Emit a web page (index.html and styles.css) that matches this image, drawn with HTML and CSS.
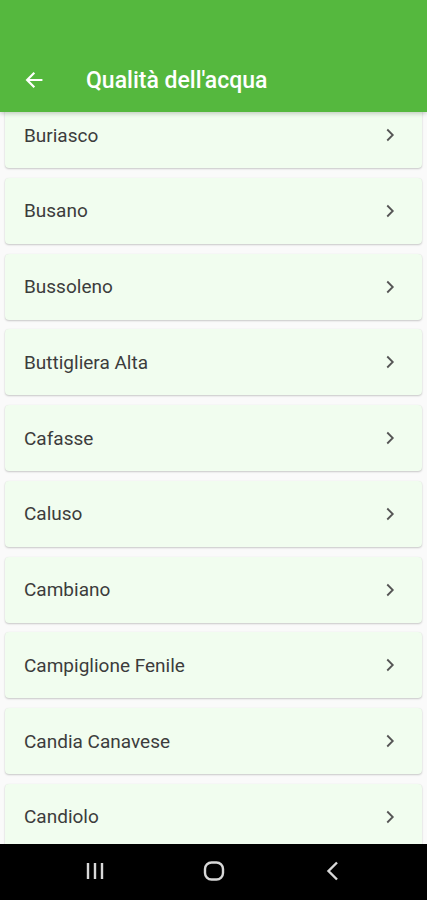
FILE: index.html
```html
<!DOCTYPE html>
<html lang="it">

<head>
    <meta charset="UTF-8">
    <meta name="viewport" content="width=device-width, initial-scale=1.0">
    <title>Qualità dell'acqua</title>
    <link rel="stylesheet" href="styles.css">
</head>

<body>

    <div class="screen">

        <header class="app-bar">
            <div class="toolbar">
                <svg class="back" width="22" height="22" viewBox="0 0 24 24">
                    <path d="M20 12H5M11.5 5L4.5 12l7 7" fill="none" stroke="#fff" stroke-width="2.4" stroke-linecap="square" />
                </svg>
                <h1>Qualità dell'acqua</h1>
            </div>
        </header>

        <div class="list">
            <div class="card"><span>Buriasco</span><svg class="chev" viewBox="0 0 24 24"><path d="M9 6l6 6-6 6" /></svg></div>
            <div class="card"><span>Busano</span><svg class="chev" viewBox="0 0 24 24"><path d="M9 6l6 6-6 6" /></svg></div>
            <div class="card"><span>Bussoleno</span><svg class="chev" viewBox="0 0 24 24"><path d="M9 6l6 6-6 6" /></svg></div>
            <div class="card"><span>Buttigliera Alta</span><svg class="chev" viewBox="0 0 24 24"><path d="M9 6l6 6-6 6" /></svg></div>
            <div class="card"><span>Cafasse</span><svg class="chev" viewBox="0 0 24 24"><path d="M9 6l6 6-6 6" /></svg></div>
            <div class="card"><span>Caluso</span><svg class="chev" viewBox="0 0 24 24"><path d="M9 6l6 6-6 6" /></svg></div>
            <div class="card"><span>Cambiano</span><svg class="chev" viewBox="0 0 24 24"><path d="M9 6l6 6-6 6" /></svg></div>
            <div class="card"><span>Campiglione Fenile</span><svg class="chev" viewBox="0 0 24 24"><path d="M9 6l6 6-6 6" /></svg></div>
            <div class="card"><span>Candia Canavese</span><svg class="chev" viewBox="0 0 24 24"><path d="M9 6l6 6-6 6" /></svg></div>
            <div class="card"><span>Candiolo</span><svg class="chev" viewBox="0 0 24 24"><path d="M9 6l6 6-6 6" /></svg></div>
        </div>

        <nav class="nav-bar">
            <svg width="24" height="24" viewBox="0 0 24 24">
                <path d="M5 4v16M12 4v16M19 4v16" stroke="#d8d8d8" stroke-width="2.4" />
            </svg>
            <svg width="24" height="24" viewBox="0 0 24 24">
                <rect x="3" y="3.5" width="18" height="17" rx="6.5" fill="none" stroke="#d8d8d8" stroke-width="2.4" />
            </svg>
            <svg width="24" height="24" viewBox="0 0 24 24">
                <path d="M16 3.5L7.5 12l8.5 8.5" fill="none" stroke="#d8d8d8" stroke-width="2.4" />
            </svg>
        </nav>

    </div>

</body>

</html>
```

FILE: styles.css
```css
body {
    margin: 0;
    font-family: Roboto, "Noto Sans", Arial, sans-serif;
    background-color: #fafafa;
}

.screen {
    width: 427px;
    height: 900px;
    display: flex;
    flex-direction: column;
    overflow: hidden;
    background-color: #fafafa;
}

.app-bar {
    height: 112px;
    flex-shrink: 0;
    background-color: #55b83e;
    display: flex;
    flex-direction: column;
    justify-content: flex-end;
    position: relative;
    z-index: 2;
    box-shadow: 0 2px 4px rgba(0, 0, 0, 0.18);
}

.toolbar {
    height: 56px;
    display: flex;
    align-items: center;
    padding-left: 23px;
    padding-bottom: 8px;
    box-sizing: border-box;
}

.back {
    flex-shrink: 0;
}

.toolbar h1 {
    margin: 0 0 0 41px;
    color: #fff;
    font-size: 23px;
    font-weight: 500;
}

.list {
    flex: 1;
    margin-top: -10px;
    padding: 0 5px;
    display: flex;
    flex-direction: column;
    gap: 9.75px;
    overflow: hidden;
}

.card {
    flex-shrink: 0;
    height: 66px;
    background-color: #f1fdef;
    border-radius: 4px;
    box-shadow: 0 1px 2px rgba(0, 0, 0, 0.2), 0 0 1px rgba(0, 0, 0, 0.08);
    display: flex;
    align-items: center;
    justify-content: space-between;
    padding: 0 21px 0 19px;
}

.card span {
    font-size: 19px;
    color: #3c3c3c;
}

.chev {
    width: 22px;
    height: 22px;
}

.chev path {
    fill: none;
    stroke: #555;
    stroke-width: 2;
}

.nav-bar {
    height: 56px;
    box-sizing: border-box;
    flex-shrink: 0;
    background-color: #000;
    display: flex;
    align-items: center;
    justify-content: center;
    gap: 95px;
    padding-bottom: 2px;
    position: relative;
    z-index: 2;
}
```
